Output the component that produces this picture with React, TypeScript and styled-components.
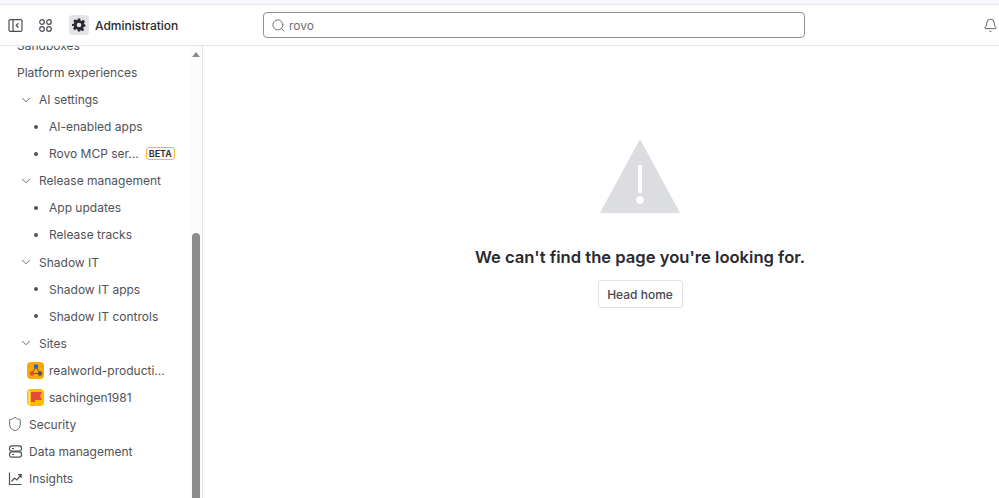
import type { ReactNode } from 'react'
import styled, { createGlobalStyle } from 'styled-components'
import { Search, Bell, ChevronDown, Shield } from 'lucide-react'

const GlobalStyle = createGlobalStyle`
    html, body {
        margin: 0;
        height: 100%;
        overflow: hidden;
        background: #ffffff;
        font-family: Inter, "Liberation Sans", sans-serif;
        color: #292a2e;
    }
    #root {
        height: 100%;
    }
`

const Page = styled.div`
    display: flex;
    flex-direction: column;
    height: 498px;
    width: 999px;
    overflow: hidden;
`

const TopStrip = styled.div`
    height: 4px;
    flex-shrink: 0;
    background: #f8f6fd;
    border-bottom: 1px solid #e6e6ec;
`

const Header = styled.header`
    height: 40px;
    flex-shrink: 0;
    display: flex;
    align-items: center;
    padding-left: 8px;
    border-bottom: 1px solid #e4e5e7;
`

const IconSlot = styled.span`
    width: 15px;
    height: 15px;
    display: flex;
    color: #4b4d55;
    margin-right: 15px;
`

const AdminIcon = styled.span`
    width: 20px;
    height: 20px;
    margin-left: 1px;
    border-radius: 4px;
    background: #e3e4e7;
    display: flex;
    align-items: center;
    justify-content: center;
`

const AdminLabel = styled.span`
    margin-left: 6px;
    font-size: 12px;
    font-weight: 500;
    color: #292a2e;
    width: 168px;
`

const SearchBox = styled.div`
    width: 542px;
    height: 26px;
    box-sizing: border-box;
    border: 1px solid #8c8f97;
    border-radius: 4px;
    display: flex;
    align-items: center;
    gap: 3px;
    padding-left: 7px;
    font-size: 12px;
    color: #6b6e76;
`

const BellSlot = styled.span`
    display: flex;
    color: #4b4d55;
    margin-left: auto;
    margin-right: 1px;
`

const Body = styled.div`
    flex: 1;
    display: flex;
    min-height: 0;
`

const Sidebar = styled.aside`
    width: 203px;
    flex-shrink: 0;
    display: flex;
    box-sizing: border-box;
    border-right: 1px solid #e4e5e7;
`

const NavList = styled.nav`
    flex: 1;
    min-width: 0;
    overflow: hidden;
`

const NavInner = styled.div`
    margin-top: -14px;
`

const Row = styled.div<{ $indent: number }>`
    height: 27.07px;
    display: flex;
    align-items: center;
    padding-left: ${props => props.$indent}px;
    font-size: 12px;
    color: #505258;
    white-space: nowrap;
`

const RowIcon = styled.span<{ $gap: number }>`
    width: 16px;
    height: 16px;
    display: flex;
    align-items: center;
    justify-content: center;
    margin-right: ${props => props.$gap}px;
    color: #505258;
`

const Bullet = styled.span`
    width: 4px;
    height: 4px;
    border-radius: 50%;
    background: #505258;
    margin: 0 11px 0 34px;
`

const BetaBadge = styled.span`
    margin-left: 7px;
    height: 11px;
    padding: 0 2px;
    display: flex;
    align-items: center;
    border: 1.5px solid #fbb53c;
    border-radius: 3px;
    font-size: 9px;
    font-weight: 600;
    color: #292a2e;
`

const ScrollTrack = styled.div`
    width: 12px;
    flex-shrink: 0;
    display: flex;
    flex-direction: column;
    background: #fcfcfc;
`

const ScrollArrow = styled.span`
    width: 0;
    height: 0;
    margin: 6px 0 0 2px;
    border-left: 4px solid transparent;
    border-right: 4px solid transparent;
    border-bottom: 5px solid #8a8a8a;
`

const ScrollThumb = styled.div`
    margin: 176px 2px 0 2px;
    flex: 1;
    background: #8d8d8d;
    border-radius: 4px 4px 0 0;
`

const Main = styled.main`
    flex: 1;
    display: flex;
    flex-direction: column;
    align-items: center;
    padding: 93px 0 0 78px;
`

const Heading = styled.h1`
    margin: 32px 0 0;
    font-size: 16.6px;
    line-height: 24px;
    font-weight: 600;
    color: #292a2e;
`

const HomeButton = styled.button`
    margin-top: 11px;
    width: 85px;
    height: 28px;
    padding: 0;
    background: #ffffff;
    border: 1px solid #e0e1e4;
    border-radius: 3px;
    font-family: inherit;
    font-size: 12px;
    font-weight: 500;
    color: #46484e;
`

const SiteLogo = styled.span<{ $color: string }>`
    width: 17px;
    height: 17px;
    border-radius: 4px;
    background: ${props => props.$color};
    display: flex;
    align-items: center;
    justify-content: center;
    margin-right: 5px;
`

const SidebarToggleIcon = () => (
    <svg width="15" height="15" viewBox="0 0 15 15" fill="none" stroke="currentColor" strokeWidth="1.2">
        <rect x="1" y="1.6" width="13" height="11.8" rx="1.5" />
        <path d="M5 1.6v11.8M10.4 5.2 8.2 7.5l2.2 2.3" />
    </svg>
)

const AppsIcon = () => (
    <svg width="15" height="15" viewBox="0 0 15 15" fill="none" stroke="currentColor" strokeWidth="1.2">
        <circle cx="4" cy="4" r="2.3" />
        <circle cx="11" cy="4" r="2.3" />
        <circle cx="4" cy="11" r="2.3" />
        <circle cx="11" cy="11" r="2.3" />
    </svg>
)

const GearIcon = () => (
    <svg width="14" height="14" viewBox="0 0 24 24" fill="#292a2e">
        <path
            fillRule="evenodd"
            d="M10 1h4l.7 3.2 1.9.8 2.8-1.8 2.8 2.8-1.8 2.8.8 1.9L23 11.4v3.2l-3.2.7-.8 1.9 1.8 2.8-2.8 2.8-2.8-1.8-1.9.8L14 23h-4l-.7-3.2-1.9-.8-2.8 1.8-2.8-2.8 1.8-2.8-.8-1.9L0 13.6v-3.2l3.2-.7.8-1.9-1.8-2.8L5 2.2 7.8 4l1.9-.8zM12 8a4 4 0 1 0 0 8 4 4 0 0 0 0-8z"
        />
    </svg>
)

const DataIcon = () => (
    <svg width="15" height="15" viewBox="0 0 15 15" fill="none" stroke="currentColor" strokeWidth="1.2">
        <rect x="1.5" y="1.8" width="12" height="5.4" rx="2.2" />
        <rect x="1.5" y="7.8" width="12" height="5.4" rx="2.2" />
        <path d="M4 4.5h2M4 10.5h2" />
    </svg>
)

const ChartIcon = () => (
    <svg width="15" height="15" viewBox="0 0 15 15" fill="none" stroke="currentColor" strokeWidth="1.2">
        <path d="M1.5 1.5v12h12" />
        <path d="M3.5 10.5 6.5 7l2.3 2 4.2-5M10 3.6h3.2v3.2" />
    </svg>
)

const NetworkLogo = () => (
    <SiteLogo $color="#fca700">
        <svg width="14" height="14" viewBox="0 0 14 14" fill="none">
            <path d="M7 3.5 3 10.5h8z" stroke="#6b5a3a" strokeWidth="1" />
            <circle cx="7" cy="3.5" r="2.2" fill="#1868db" />
            <circle cx="3" cy="10.5" r="2.2" fill="#e2483d" />
            <circle cx="11" cy="10.5" r="2.2" fill="#505258" />
        </svg>
    </SiteLogo>
)

const FlagLogo = () => (
    <SiteLogo $color="#fcbc05">
        <svg width="17" height="17" viewBox="0 0 17 17">
            <rect x="1.5" y="2" width="1.5" height="15" fill="#ffe9a8" />
            <path d="M4 3h11l-2 4 2 4H8v2H4z" fill="#e2483d" />
        </svg>
    </SiteLogo>
)

const WarningIllustration = () => (
    <svg width="80" height="74" viewBox="0 0 80 74">
        <path d="M40 0 80 74H0z" fill="#dcdde1" />
        <rect x="38" y="26" width="4" height="28" fill="#ffffff" />
        <circle cx="40" cy="61" r="3.8" fill="#ffffff" />
    </svg>
)

const SubItem = ({ label, children }: { label: string, children?: ReactNode }) => (
    <Row $indent={0}>
        <Bullet />
        {label}
        {children}
    </Row>
)

const Group = ({ label }: { label: string }) => (
    <Row $indent={18}>
        <RowIcon $gap={5}>
            <ChevronDown size={14} strokeWidth={1.5} />
        </RowIcon>
        {label}
    </Row>
)

const SideNav = () => (
    <Sidebar>
        <NavList>
            <NavInner>
                <Row $indent={17}>Sandboxes</Row>
                <Row $indent={17}>Platform experiences</Row>
                <Group label="AI settings" />
                <SubItem label="AI-enabled apps" />
                <SubItem label="Rovo MCP ser...">
                    <BetaBadge>BETA</BetaBadge>
                </SubItem>
                <Group label="Release management" />
                <SubItem label="App updates" />
                <SubItem label="Release tracks" />
                <Group label="Shadow IT" />
                <SubItem label="Shadow IT apps" />
                <SubItem label="Shadow IT controls" />
                <Group label="Sites" />
                <Row $indent={27}>
                    <NetworkLogo />
                    realworld-producti...
                </Row>
                <Row $indent={27}>
                    <FlagLogo />
                    sachingen1981
                </Row>
                <Row $indent={7}>
                    <RowIcon $gap={6}>
                        <Shield size={16} strokeWidth={1.3} />
                    </RowIcon>
                    Security
                </Row>
                <Row $indent={7}>
                    <RowIcon $gap={6}>
                        <DataIcon />
                    </RowIcon>
                    Data management
                </Row>
                <Row $indent={7}>
                    <RowIcon $gap={6}>
                        <ChartIcon />
                    </RowIcon>
                    Insights
                </Row>
            </NavInner>
        </NavList>
        <ScrollTrack>
            <ScrollArrow />
            <ScrollThumb />
        </ScrollTrack>
    </Sidebar>
)

export default function App() {
    return (
        <Page>
            <GlobalStyle />
            <TopStrip />
            <Header>
                <IconSlot><SidebarToggleIcon /></IconSlot>
                <IconSlot><AppsIcon /></IconSlot>
                <AdminIcon><GearIcon /></AdminIcon>
                <AdminLabel>Administration</AdminLabel>
                <SearchBox>
                    <Search size={15} strokeWidth={1.5} />
                    rovo
                </SearchBox>
                <BellSlot><Bell size={15} strokeWidth={1.4} /></BellSlot>
            </Header>
            <Body>
                <SideNav />
                <Main>
                    <WarningIllustration />
                    <Heading>We can't find the page you're looking for.</Heading>
                    <HomeButton>Head home</HomeButton>
                </Main>
            </Body>
        </Page>
    )
}
